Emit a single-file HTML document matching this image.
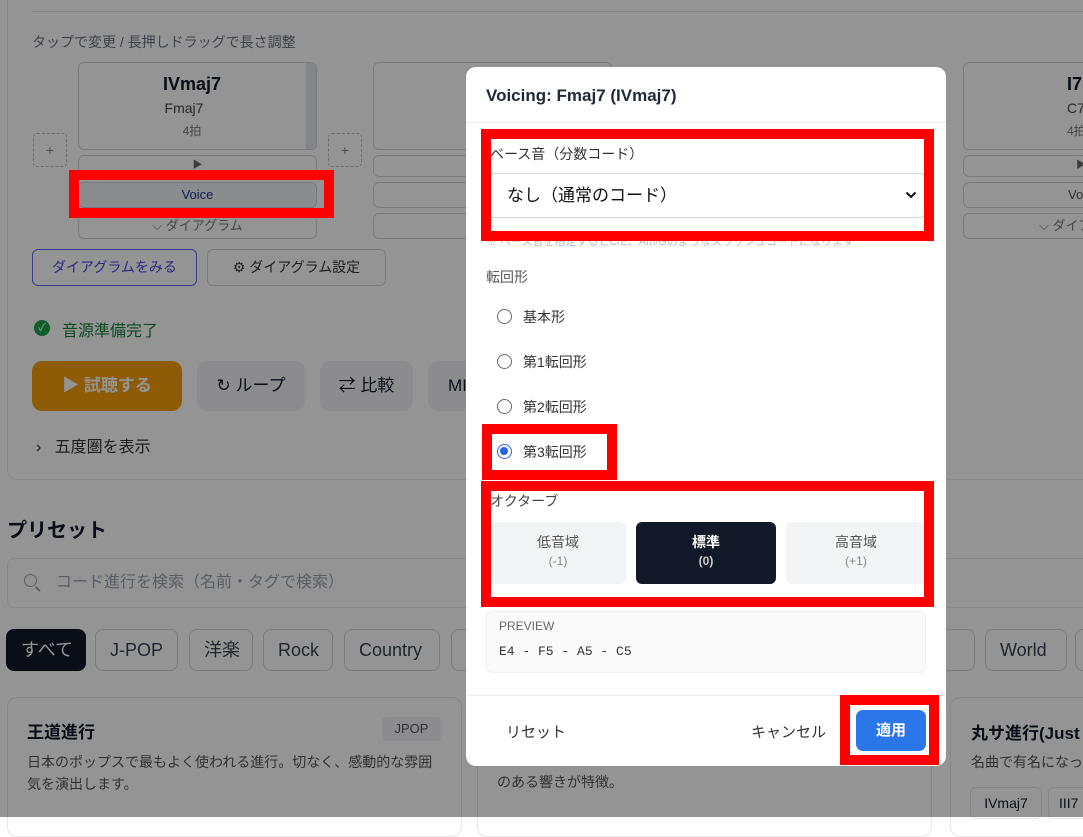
<!DOCTYPE html>
<html><head><meta charset="utf-8"><style>
*{box-sizing:border-box;margin:0;padding:0}
body{width:1083px;height:817px;overflow:hidden;position:relative;background:#fff;font-family:"Liberation Sans","Noto Sans CJK JP",sans-serif;color:#111827}
.a{position:absolute;white-space:nowrap}
.bx{position:absolute;border:1px solid #d1d5db;border-radius:6px;background:#fff}
.dash{position:absolute;border:1px dashed #b8bcc4;border-radius:4px;color:#888;font-size:14px;text-align:center;line-height:32px}
.c{text-align:center}
.chip{position:absolute;top:629px;height:42px;border:1px solid #d1d5db;border-radius:8px;font-size:18px;line-height:40px;padding:0 14px;color:#374151;background:#fff;white-space:nowrap}
.ov{position:absolute;inset:0;background:rgba(0,0,0,0.42)}
.red{position:absolute;border:10px solid #ff0000}
.rad{position:absolute;left:497px;width:15px;height:15px;border:1.5px solid #666;border-radius:50%}
.rl{position:absolute;left:523px;font-size:14px;color:#333}
</style></head><body>
<div class="a" style="left:7px;top:-10px;width:1090px;height:490px;border:1px solid #e5e7eb;border-radius:10px"></div>
<div class="a" style="left:32px;top:11px;width:1060px;height:1px;background:#e5e7eb"></div>
<div class="a" style="left:32px;top:32px;font-size:14px;color:#6b7280">タップで変更 / 長押しドラッグで長さ調整</div>

<div class="dash" style="left:33px;top:133px;width:34px;height:34px">+</div>
<div class="dash" style="left:328px;top:133px;width:34px;height:34px">+</div>
<div class="dash" style="left:623px;top:133px;width:34px;height:34px">+</div>

<div class="bx" style="left:78px;top:62px;width:239px;height:88px"></div>
<div class="a" style="left:306px;top:63px;width:10px;height:86px;background:#e5e7eb;border-radius:0 6px 6px 0"></div>
<div class="a c" style="left:78px;top:74px;width:228px;font-size:18px;font-weight:bold">IVmaj7</div>
<div class="a c" style="left:78px;top:100px;width:212px;font-size:14px;color:#444">Fmaj7</div>
<div class="a c" style="left:78px;top:122px;width:228px;font-size:12px;color:#777">4拍</div>
<div class="bx" style="left:78px;top:155px;width:239px;height:22px;font-size:10px;color:#666;text-align:center;line-height:20px">▶</div>
<div class="bx" style="left:78px;top:182px;width:239px;height:26px;background:#eef2f7;border-color:#c7d2e3;font-size:13px;color:#1e3a8a;text-align:center;line-height:24px">Voice</div>
<div class="bx" style="left:78px;top:213px;width:239px;height:26px;font-size:13px;color:#777;text-align:center;line-height:24px">⌵ ダイアグラム</div>

<div class="bx" style="left:373px;top:62px;width:239px;height:88px"></div>
<div class="bx" style="left:373px;top:155px;width:239px;height:22px"></div>
<div class="bx" style="left:373px;top:182px;width:239px;height:26px"></div>
<div class="bx" style="left:373px;top:213px;width:239px;height:26px"></div>

<div class="bx" style="left:963px;top:62px;width:239px;height:88px"></div>
<div class="a" style="left:1067px;top:74px;font-size:18px;font-weight:bold">I7</div>
<div class="a" style="left:1067px;top:100px;font-size:14px;color:#444">C7</div>
<div class="a" style="left:1067px;top:122px;font-size:12px;color:#777">4拍</div>
<div class="bx" style="left:963px;top:155px;width:239px;height:22px;font-size:10px;color:#666;line-height:20px;padding-left:112px">▶</div>
<div class="bx" style="left:963px;top:182px;width:239px;height:26px;font-size:13px;color:#555;line-height:24px;padding-left:104px">Voice</div>
<div class="bx" style="left:963px;top:213px;width:239px;height:26px;font-size:13px;color:#777;line-height:24px;padding-left:75px;white-space:nowrap">⌵ ダイアグラム</div>

<div class="bx" style="left:32px;top:249px;width:165px;height:37px;border-color:#6366f1;color:#4f46e5;font-size:14px;text-align:center;line-height:35px">ダイアグラムをみる</div>
<div class="bx" style="left:207px;top:249px;width:179px;height:37px;font-size:14px;text-align:center;line-height:35px;color:#333">⚙ ダイアグラム設定</div>

<div class="a" style="left:34px;top:320px;width:16px;height:16px;border-radius:50%;background:#16a34a;color:#fff;font-size:11px;text-align:center;line-height:16px">✓</div>
<div class="a" style="left:62px;top:317px;font-size:16px;color:#15803d">音源準備完了</div>

<div class="a" style="left:32px;top:361px;width:150px;height:50px;border-radius:10px;background:#f59e0b;color:#fff;font-size:17px;font-weight:bold;text-align:center;line-height:50px">▶ 試聴する</div>
<div class="a" style="left:197px;top:361px;width:108px;height:50px;border-radius:10px;background:#f1f2f4;font-size:17px;text-align:center;line-height:50px">↻ ループ</div>
<div class="a" style="left:320px;top:361px;width:93px;height:50px;border-radius:10px;background:#f1f2f4;font-size:17px;text-align:center;line-height:50px">⇄ 比較</div>
<div class="a" style="left:428px;top:361px;width:80px;height:50px;border-radius:10px;background:#f1f2f4;font-size:17px;line-height:50px;padding-left:20px">MI</div>
<div class="a" style="left:36px;top:433px;font-size:16px;color:#333">›&nbsp;&nbsp; 五度圏を表示</div>

<div class="a" style="left:7px;top:514px;font-size:20px;font-weight:bold">プリセット</div>
<div class="a" style="left:7px;top:558px;width:1090px;height:50px;border:1px solid #e5e7eb;border-radius:8px;font-size:16px;color:#9ca3af;line-height:48px;padding-left:48px">コード進行を検索（名前・タグで検索）</div>
<div class="a" style="left:24px;top:574px;width:13px;height:13px;border:1.5px solid #9ca3af;border-radius:50%"></div>
<div class="a" style="left:35px;top:588px;width:6px;height:1.5px;background:#9ca3af;transform:rotate(45deg)"></div>

<div class="chip" style="left:6px;width:80px;background:#111827;color:#fff;border-color:#111827">すべて</div>
<div class="chip" style="left:95px;width:83px">J-POP</div>
<div class="chip" style="left:189px;width:64px">洋楽</div>
<div class="chip" style="left:263px;width:70px">Rock</div>
<div class="chip" style="left:344px;width:96px">Country</div>
<div class="chip" style="left:451px;width:40px"></div>
<div class="chip" style="left:900px;width:75px;padding-left:0">&nbsp;sic</div>
<div class="chip" style="left:985px;width:82px">World</div>
<div class="chip" style="left:1075px;width:30px"></div>

<div class="a" style="left:7px;top:697px;width:455px;height:140px;border:1px solid #e5e7eb;border-radius:10px"></div>
<div class="a" style="left:27px;top:718px;font-size:17px;font-weight:bold">王道進行</div>
<div class="a" style="left:382px;top:717px;width:59px;height:24px;background:#f1f2f4;border-radius:4px;font-size:13px;color:#555;text-align:center;line-height:24px">JPOP</div>
<div class="a" style="left:27px;top:751px;width:410px;font-size:14px;color:#555;line-height:22px;white-space:normal">日本のポップスで最もよく使われる進行。切なく、感動的な雰囲気を演出します。</div>
<div class="a" style="left:477px;top:697px;width:455px;height:140px;border:1px solid #e5e7eb;border-radius:10px"></div>
<div class="a" style="left:497px;top:772px;font-size:14px;color:#555">のある響きが特徴。</div>
<div class="a" style="left:950px;top:697px;width:150px;height:140px;border:1px solid #e5e7eb;border-radius:10px"></div>
<div class="a" style="left:971px;top:719px;font-size:17px;font-weight:bold">丸サ進行(Just</div>
<div class="a" style="left:971px;top:752px;font-size:14px;color:#555">名曲で有名になっ</div>
<div class="a" style="left:970px;top:787px;width:72px;height:32px;border:1px solid #e5e7eb;border-radius:6px;font-size:14px;text-align:center;line-height:30px">IVmaj7</div>
<div class="a" style="left:1048px;top:787px;width:50px;height:32px;border:1px solid #e5e7eb;border-radius:6px;font-size:14px;line-height:30px;padding-left:10px">III7</div>

<div class="ov"></div>

<div class="a" style="left:466px;top:67px;width:480px;height:699px;background:#fff;border-radius:10px;overflow:hidden">
 <div class="a" style="left:20px;top:19px;font-size:17px;font-weight:bold;color:#1f2937">Voicing: Fmaj7 (IVmaj7)</div>
 <div class="a" style="left:0;top:55px;width:480px;height:1px;background:#eee"></div>
 <div class="a" style="left:24px;top:77px;font-size:14px;color:#333">ベース音（分数コード）</div>
 <div class="a" style="left:20px;top:106px;width:440px;height:45px;border:1px solid #d1d5db;border-radius:6px;font-size:17px;line-height:43px;padding-left:20px;color:#111">なし（通常のコード）
  <svg style="position:absolute;right:8px;top:17px" width="12" height="8" viewBox="0 0 12 8"><path d="M1.5 1.5 L6 6 L10.5 1.5" fill="none" stroke="#111" stroke-width="2"/></svg></div>
 <div class="a" style="left:20px;top:166px;font-size:11px;color:#bbb">※ ベース音を指定するとC/E、Am/Gのようなスラッシュコードになります</div>
 <div class="a" style="left:20px;top:200px;font-size:14px;color:#555">転回形</div>
 <div class="a" style="left:20px;top:544px;width:440px;height:62px;background:#fafafa;border:1px solid #f0f0f0;border-radius:6px"></div>
 <div class="a" style="left:33px;top:552px;font-size:12px;color:#666">PREVIEW</div>
 <div class="a" style="left:33px;top:577px;font-size:13px;color:#333;font-family:'Liberation Mono',monospace">E4 - F5 - A5 - C5</div>
 <div class="a" style="left:0;top:628px;width:480px;height:1px;background:#eee"></div>
 <div class="a" style="left:40px;top:654px;font-size:15px;color:#333">リセット</div>
 <div class="a" style="left:285px;top:654px;font-size:15px;color:#333">キャンセル</div>
 <div class="a" style="left:390px;top:643px;width:70px;height:41px;background:#2b77ea;border-radius:7px;color:#fff;font-size:15px;font-weight:bold;text-align:center;line-height:41px">適用</div>
</div>
<div class="rad" style="top:309px"></div><div class="rl" style="top:307px">基本形</div>
<div class="rad" style="top:354px"></div><div class="rl" style="top:352px">第1転回形</div>
<div class="rad" style="top:399px"></div><div class="rl" style="top:397px">第2転回形</div>
<div class="rad" style="top:444px;border:1.5px solid #2563eb"><div style="margin:2px;width:8px;height:8px;border-radius:50%;background:#2563eb"></div></div><div class="rl" style="top:442px">第3転回形</div>

<div class="a" style="left:490px;top:491px;font-size:14px;color:#444">オクターブ</div>
<div class="a c" style="left:490px;top:522px;width:136px;height:62px;background:#f3f4f6;border-radius:6px;color:#555;font-size:14px;padding-top:10px">低音域<br><span style="font-size:12px;color:#888">(-1)</span></div>
<div class="a c" style="left:636px;top:522px;width:140px;height:62px;background:#111827;border-radius:6px;color:#fff;font-size:14px;font-weight:bold;padding-top:10px">標準<br><span style="font-size:12px;color:#ccc">(0)</span></div>
<div class="a c" style="left:786px;top:522px;width:140px;height:62px;background:#f3f4f6;border-radius:6px;color:#555;font-size:14px;padding-top:10px">高音域<br><span style="font-size:12px;color:#888">(+1)</span></div>

<div class="red" style="left:69px;top:170px;width:265px;height:48px"></div>
<div class="red" style="left:481px;top:129px;width:453px;height:112px"></div>
<div class="red" style="left:482px;top:424px;width:135px;height:56px"></div>
<div class="red" style="left:481px;top:481px;width:453px;height:126px"></div>
<div class="red" style="left:840px;top:695px;width:99px;height:70px"></div>
</body></html>
